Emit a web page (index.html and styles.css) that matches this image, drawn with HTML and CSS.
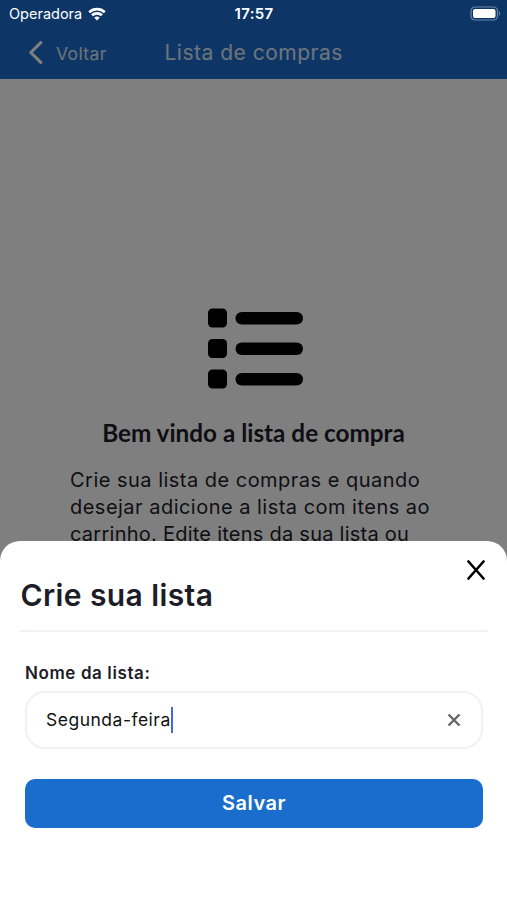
FILE: index.html
```html
<!DOCTYPE html>
<html lang="pt-BR">

<head>
    <meta charset="UTF-8" />
    <meta name="viewport" content="width=device-width, initial-scale=1.0" />
    <title>Lista de compras</title>
    <link rel="stylesheet" href="styles.css">
</head>

<body>
    <div class="app">
        <!-- tela da lista -->
        <header class="navbar">
            <a class="back">
                <svg class="back-icon" viewBox="0 0 14 22">
                    <path d="M12 1.500L2.500 11l9.500 9.500" />
                </svg>
                <span class="back-text">Voltar</span>
            </a>
            <h1 class="page-title">Lista de compras</h1>
        </header>

        <main class="welcome">
            <svg class="list-icon" viewBox="0 0 96 82">
                <rect x="0" y="0.500" width="19" height="19" rx="4.500" />
                <rect x="0" y="31" width="19" height="19" rx="4.500" />
                <rect x="0" y="61.500" width="19" height="19" rx="4.500" />
                <rect x="27.500" y="4" width="67.500" height="12.500" rx="6.250" />
                <rect x="27.500" y="34.500" width="67.500" height="12.500" rx="6.250" />
                <rect x="27.500" y="65" width="67.500" height="12.500" rx="6.250" />
            </svg>
            <h2 class="welcome-title">Bem vindo a lista de compra</h2>
            <p class="welcome-text">
                <span class="line">Crie sua lista de compras e quando</span>
                <span class="line">desejar adicione a lista com itens ao</span>
                <span class="line line-last">carrinho. Edite itens da sua lista ou</span>
            </p>
        </main>

        <!-- modal -->
        <div class="overlay">
            <div class="statusbar">
                <div class="carrier">
                    <span class="carrier-name">Operadora</span>
                    <svg class="wifi" viewBox="0 0 18 14">
                        <path d="M1.200 5.200a11.500 11.500 0 0 1 15.600 0M4 8.300a7.400 7.400 0 0 1 10 0" />
                        <path class="wifi-dot" d="M9 13.600L6.300 10.800a3.900 3.900 0 0 1 5.400 0z" />
                    </svg>
                </div>
                <span class="clock">17:57</span>
                <svg class="battery" viewBox="0 0 31 15">
                    <rect class="battery-case" x="1" y="1" width="26.500" height="13" rx="4" />
                    <rect class="battery-fill" x="3" y="3" width="22.500" height="9" rx="2" />
                    <path class="battery-tip" d="M29 5.300c1.600.7 1.600 3.700 0 4.400z" />
                </svg>
            </div>

            <section class="sheet">
                <svg class="close" viewBox="0 0 18 20">
                    <path d="M1.500 1.500l15 17M16.500 1.500l-15 17" />
                </svg>
                <h2 class="sheet-title">Crie sua lista</h2>
                <div class="form">
                    <div class="label">Nome da lista:</div>
                    <div class="field">
                        <span class="value">Segunda-feira</span>
                        <span class="caret"></span>
                        <svg class="clear" viewBox="0 0 14 14">
                            <path d="M1.500 1.500l11 11M12.500 1.500l-11 11" />
                        </svg>
                    </div>
                    <button class="save">Salvar</button>
                </div>
            </section>
        </div>
    </div>
</body>

</html>
```
FILE: styles.css
```css
* {
    margin: 0;
    padding: 0;
    box-sizing: border-box;
}

body {
    font-family: Inter, "Liberation Sans", sans-serif;
    background: #fff;
    color: #1d1d28;
}

.app {
    position: relative;
    width: 507px;
    height: 900px;
    overflow: hidden;
    white-space: nowrap;
}

/* barra de navegação */
.navbar {
    display: flex;
    align-items: center;
    height: 79px;
    padding: 28px 0 2px 28px;
    background: #1a6dcc;
    color: #fff;
}

.back {
    display: flex;
    align-items: center;
    width: 136.500px;
}

.back-icon {
    width: 15px;
    height: 23px;
    margin-right: 13px;
    fill: none;
    stroke: #fff;
    stroke-width: 3;
    stroke-linecap: round;
    stroke-linejoin: round;
}

.back-text {
    padding-top: 2px;
    font-size: 17.500px;
    letter-spacing: 0.4px;
    opacity: 0.85;
}

.page-title {
    font-size: 21px;
    font-weight: 400;
    opacity: 0.85;
    letter-spacing: 0.5px;
}

/* conteúdo */
.welcome {
    display: flex;
    flex-direction: column;
    align-items: center;
    padding-top: 229px;
}

.list-icon {
    width: 96px;
    height: 82px;
    margin-left: 4px;
    fill: #000;
}

.welcome-title {
    margin-top: 27px;
    font: bold 24.300px/32px Lato, sans-serif;
}

.welcome-text {
    align-self: flex-start;
    padding: 18px 0 0 70px;
    font-size: 20px;
    line-height: 27.200px;
}

.line {
    display: block;
    width: max-content;
    letter-spacing: 0.48px;
}

.line-last {
    letter-spacing: 0.25px;
}

.overlay {
    position: absolute;
    inset: 0;
    display: flex;
    flex-direction: column;
    justify-content: space-between;
    background: rgba(0, 0, 0, 0.5);
}

/* barra de status */
.statusbar {
    display: grid;
    grid-template-columns: 1fr auto 1fr;
    align-items: center;
    height: 27px;
    padding: 0 6px 0 9px;
    color: #fff;
    font-size: 14.500px;
}

.carrier {
    display: flex;
    align-items: center;
    gap: 6px;
}

.wifi {
    width: 18px;
    height: 14px;
    fill: none;
    stroke: #fff;
    stroke-width: 2.600;
}

.wifi-dot {
    fill: #fff;
    stroke: none;
}

.clock {
    margin-right: 2px;
    font-size: 15px;
    font-weight: 600;
    letter-spacing: 0.3px;
}

.battery {
    justify-self: end;
    width: 31px;
    height: 15px;
}

.battery-case {
    fill: none;
    stroke: #6a87a8;
    stroke-width: 1.200;
}

.battery-fill {
    fill: #fff;
}

.battery-tip {
    fill: #6a87a8;
}

/* painel */
.sheet {
    position: relative;
    height: 359.500px;
    padding: 30px 19px 0 20px;
    background: #fff;
    border-radius: 20px 20px 0 0;
}

.close {
    position: absolute;
    top: 19px;
    right: 22px;
    width: 18px;
    height: 20px;
    fill: none;
    stroke: #000;
    stroke-width: 2.600;
    stroke-linecap: round;
}

.sheet-title {
    height: 61px;
    font-size: 30px;
    line-height: 49px;
    font-weight: 600;
    letter-spacing: 0.4px;
    text-indent: 0.500px;
    border-bottom: 2px solid #eff1f3;
}

.form {
    padding: 29px 5px 0;
}

.label {
    font-size: 17px;
    line-height: 25px;
    font-weight: 600;
    letter-spacing: 0.6px;
}

.field {
    display: flex;
    align-items: center;
    height: 58px;
    margin-top: 5px;
    padding: 0 21px 0 19px;
    border: 2px solid #eff1f3;
    border-radius: 20px;
    color: #111;
    font-size: 17.500px;
    letter-spacing: 0.5px;
}

.caret {
    width: 2.500px;
    height: 26px;
    background: #4169e1;
}

.clear {
    width: 14px;
    height: 14px;
    margin-left: auto;
    margin-right: -1px;
    fill: none;
    stroke: #666;
    stroke-width: 2.400;
}

.save {
    display: block;
    width: 100%;
    height: 49px;
    margin-top: 30px;
    border: none;
    border-radius: 10px;
    background: #1a6dcc;
    color: #fff;
    font: 600 20px Inter, sans-serif;
    letter-spacing: 0.5px;
}
```
